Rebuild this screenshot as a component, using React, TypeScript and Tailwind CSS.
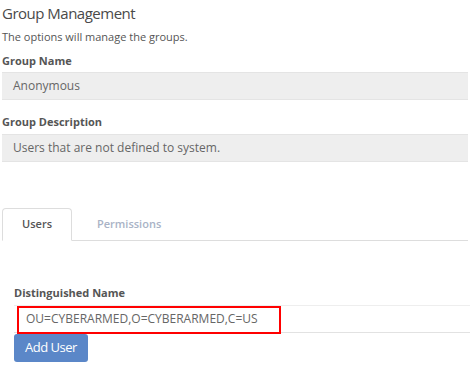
export default function App() {
    return (
        <div className="w-[470px] h-[386px] overflow-hidden bg-white text-[#555] font-['Open_Sans',sans-serif]">
            <div className="px-[2px] pt-[3px]">
                <h2 className="text-[15px] leading-[20px] tracking-[-0.5px] text-[#4a4a4a]">Group Management</h2>
                <p className="mt-[6px] text-[11px] leading-[16px] text-[#555]">The options will manage the groups.</p>

                <label className="block mt-[8px] text-[11px] leading-[16px] font-bold text-[#555]">Group Name</label>
                <div className="mt-[3px] h-[28px] flex items-center pl-[11px] bg-[#eee] border-t border-b border-[#e4e4e4] text-[12px] text-[#666]">
                    Anonymous
                </div>

                <label className="block mt-[14px] text-[11px] leading-[16px] font-bold text-[#555]">Group Description</label>
                <div className="mt-[4px] h-[28px] flex items-center pl-[11px] bg-[#eee] border-t border-b border-[#e4e4e4] text-[12px] text-[#666]">
                    Users that are not defined to system.
                </div>

                <div className="mt-[46px] flex border-b border-[#ddd] h-[33px]">
                    <div className="w-[70px] h-[33px] flex items-center justify-center bg-white border border-[#ddd] border-b-white rounded-t-[4px] text-[11px] font-semibold text-[#555]">
                        Users
                    </div>
                    <div className="ml-[5px] px-[20px] flex items-center text-[11px] font-semibold text-[#a9b3c6]">
                        Permissions
                    </div>
                </div>
            </div>

            <div className="pl-[14px] pt-[44px]">
                <label className="block text-[11px] leading-[16px] font-bold text-[#555]">Distinguished Name</label>
                <div className="relative mt-[4px] h-[28px] flex items-center pl-[12px] bg-white border-t border-t-[#eee] border-b border-b-[#e2e2e2] text-[12px] text-[#666]">
                    OU=CYBERARMED,O=CYBERARMED,C=US
                    <div className="absolute left-[3px] top-0 w-[264px] h-[28px] border-2 border-[#f00]" />
                </div>
                <button className="mt-px w-[74px] h-[28px] rounded-[3px] bg-[#5b87c8] text-white text-[13px] tracking-[-0.5px] flex items-center justify-center">
                    Add User
                </button>
            </div>
        </div>
    )
}
